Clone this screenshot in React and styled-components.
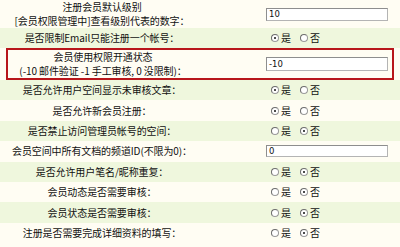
import React from 'react';
import styled, { createGlobalStyle } from 'styled-components';

const GlobalStyle = createGlobalStyle`
    body {
        margin: 0;
        background: #fffdf3;
        font-family: 'Liberation Sans', 'Noto Sans CJK SC', sans-serif;
        color: #111;
    }
`;

const Table = styled.div`
    width: 400px;
    height: 247px;
    overflow: hidden;
    background: #fffdf3;
`;

const Row = styled.div`
    display: grid;
    grid-template-columns: ${p => p.$highlight ? '190px 1fr' : '204px 1fr'};
    align-items: center;
    height: ${p => p.$h || 20.4}px;
    box-sizing: border-box;
    background: ${p => p.$alt ? '#eff7dd' : '#fffdf3'};
    ${p => p.$highlight && `
        margin: 0 6px;
        border: 2px solid #b8161b;
    `}
`;

const Label = styled.div`
    text-align: center;
    font-family: 'Noto Sans CJK SC', sans-serif;
    font-size: 10px;
    line-height: 14px;
    white-space: nowrap;
    letter-spacing: -0.1px;
`;

const Value = styled.div`
    display: flex;
    align-items: center;
    padding-left: ${p => p.$pad}px;
`;

const TextInput = styled.div`
    width: 122px;
    height: ${p => p.$h || 13}px;
    box-sizing: border-box;
    background: #fff;
    border: 1px solid #b4b4b4;
    border-top-color: #8e8e8e;
    border-left-color: #8e8e8e;
    font-family: 'DejaVu Sans', sans-serif;
    font-size: 8.5px;
    line-height: ${p => (p.$h || 13) - 2}px;
    padding-left: 2px;
`;

const RadioGroup = styled.div`
    display: flex;
    align-items: center;
    gap: 9px;
`;

const RadioItem = styled.span`
    display: inline-flex;
    align-items: center;
    gap: 2px;
    font-family: 'Noto Sans CJK SC', sans-serif;
    font-size: 10px;
    line-height: 12px;
`;

const Dot = styled.span`
    width: 8px;
    height: 8px;
    box-sizing: border-box;
    border-radius: 50%;
    border: 1px solid #9a9a9a;
    border-top-color: #6c6c6c;
    border-left-color: #6c6c6c;
    background: #fff;
    display: inline-flex;
    align-items: center;
    justify-content: center;
    &::after {
        content: '';
        width: 2px;
        height: 2px;
        border-radius: 50%;
        background: ${p => p.$on ? '#111' : 'transparent'};
    }
`;

const Radio = ({ yes }) => (
    <RadioGroup>
        <RadioItem><Dot $on={yes} />是</RadioItem>
        <RadioItem><Dot $on={!yes} />否</RadioItem>
    </RadioGroup>
);

const rows = [
    { label: '是否允许用户空间显示未审核文章：', yes: true },
    { label: '是否允许新会员注册：', yes: true },
    { label: '是否禁止访问管理员帐号的空间：', yes: false },
    { label: '会员空间中所有文档的频道ID(不限为0)：', input: '0' },
    { label: '是否允许用户笔名/昵称重复：', yes: false },
    { label: '会员动态是否需要审核：', yes: false },
    { label: '会员状态是否需要审核：', yes: false },
    { label: '注册是否需要完成详细资料的填写：', yes: false },
];

const App = () => {
    return (
        <>
            <GlobalStyle />
            <Table>
                <Row $h={28}>
                    <Label>注册会员默认级别<br />[会员权限管理中]查看级别代表的数字：</Label>
                    <Value $pad={62}><TextInput>10</TextInput></Value>
                </Row>
                <Row $h={20} $alt>
                    <Label>是否限制Email只能注册一个帐号：</Label>
                    <Value $pad={67}><Radio yes /></Value>
                </Row>
                <Row $h={32} $highlight>
                    <Label>会员使用权限开通状态<br />(-10 邮件验证 -1 手工审核, 0 没限制)：</Label>
                    <Value $pad={68}><TextInput $h={14}>-10</TextInput></Value>
                </Row>
                {rows.map((r, i) => (
                    <Row key={i} $alt={i % 2 === 0}>
                        <Label>{r.label}</Label>
                        {r.input !== undefined
                            ? <Value $pad={62}><TextInput $h={12}>{r.input}</TextInput></Value>
                            : <Value $pad={67}><Radio yes={r.yes} /></Value>}
                    </Row>
                ))}
            </Table>
        </>
    );
};

export default App;
